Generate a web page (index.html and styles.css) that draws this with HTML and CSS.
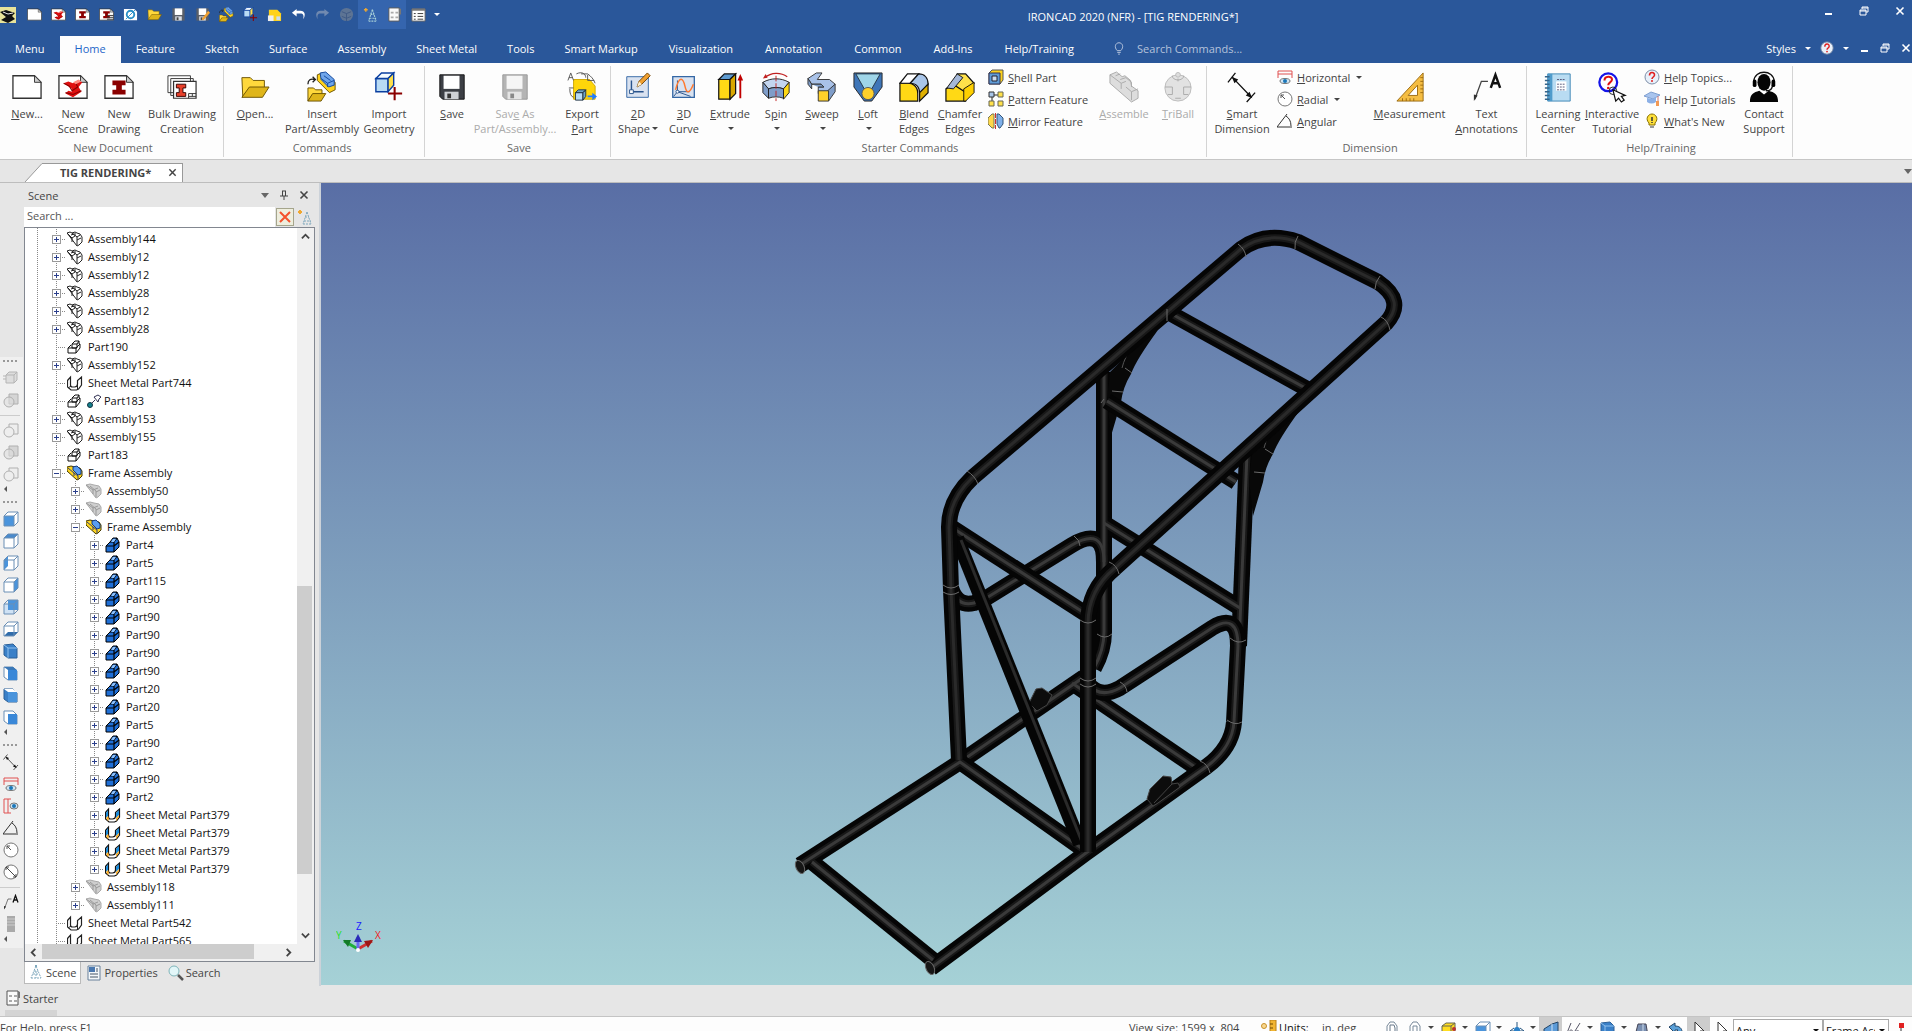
FILE: index.html
```
<!DOCTYPE html>
<html lang="en">
<head>
    <meta charset="UTF-8">
    <meta name="viewport" content="width=device-width, initial-scale=1.0">
    <title>IRONCAD 2020 (NFR) - [TIG RENDERING*]</title>
    <link rel="stylesheet" href="styles.css">
</head>
<body>

<!-- icon sprite -->
<svg class="sprite" aria-hidden="true">
    <symbol id="page" viewBox="0 0 32 32"><path d="M1 4h23l7 7v17H1z" fill="#fff" stroke="#333" stroke-width="1.4"/><path d="M24 4v7h7z" fill="#ccc" stroke="#333"/></symbol>
    <symbol id="scene" viewBox="0 0 32 32"><use href="#page"/><path d="M6 12l5-2 5 2 5-3 5 2-4 5 3 5-9 6-8-4 3-3 4 1v-3z" fill="#e01010"/><path d="M6 12l6 3 3 5 6-4-2-4 4-2M8 22l8 2 9-4" fill="none" stroke="#8a0000" stroke-width="1.200"/><path d="M16 11l6-3 3 2-6 3z" fill="#ff8a80"/></symbol>
    <symbol id="ibeam" viewBox="0 0 32 32"><use href="#page"/><path d="M9 9h14v5h-4v5h4v5H9v-5h4v-5H9z" fill="#8b0000"/></symbol>
    <symbol id="bulk" viewBox="0 0 32 32"><path d="M1 4h24v18H1z M4 7h24v18H4z" fill="#fff" stroke="#333"/><path d="M7 10h24v18H7z" fill="#fff" stroke="#333" stroke-width="1.3"/><path d="M10 13h10v4h-3v5h3v4H10v-4h3v-5h-3z" fill="#e8402a" stroke="#300"/><path d="M23 23h8M23 26h8M23 23v5M27 23v3" stroke="#333"/></symbol>
    <symbol id="folder" viewBox="0 0 32 32"><path d="M2 6h9l3 3h12v8L10 20 3 27z" fill="#ffd83c" stroke="#6b5200"/><path d="M2 27l8-11h21l-7 11z" fill="#dfb51a" stroke="#6b5200"/></symbol>
    <symbol id="insert" viewBox="0 0 32 32"><path d="M1 17h6l2 2h7v5H6l-5 7z" fill="#ffd83c" stroke="#6b5200"/><path d="M1 31l5-8h14l-5 8z" fill="#dfb51a" stroke="#6b5200"/><path d="M1 13c0-5 3-6 7-5m-2-3l3 3-3 3" fill="none" stroke="#222" stroke-width="1.4"/><path d="M11 3l5-2 14 10v8l-6 3-13-13z" fill="#ffd21a" stroke="#6b5200"/><path d="M14 1l6-1 9 8v6l-6 2-8-8z" fill="#6fa5ea" stroke="#10459c"/><path d="M15 7l7 5v4M22 12l7-3M18 4l7 5" fill="none" stroke="#10459c"/></symbol>
    <symbol id="import" viewBox="0 0 32 32"><path d="M2 7h13v14H2z" fill="#b8dbf5" stroke="#0a3fa0" stroke-width="1.5"/><path d="M2 7l6-6h13l-6 6z" fill="#f4fbff" stroke="#0a3fa0" stroke-width="1.5"/><path d="M15 7l6-6v13l-6 7z" fill="#ffe04a" stroke="#0a3fa0" stroke-width="1.5"/><path d="M22 16v14M15 23h15" stroke="#8b0000" stroke-width="2.2"/></symbol>
    <symbol id="save" viewBox="0 0 32 32"><path d="M3 3h26v26H6l-3-3z" fill="#3c3f45" stroke="#111"/><path d="M7 4h17v14H7z" fill="#fff"/><path d="M8 21h15v8H8z" fill="#cfd2d6"/><path d="M11 23h4v5h-4z" fill="#333"/></symbol>
    <symbol id="save-off" viewBox="0 0 32 32"><path d="M3 3h26v26H6l-3-3z" fill="#b4b4b4" stroke="#999"/><path d="M7 4h17v14H7z" fill="#f5f5f5"/><path d="M8 21h15v8H8z" fill="#e4e4e4"/><path d="M11 23h4v5h-4z" fill="#888"/></symbol>
    <symbol id="save-small" viewBox="0 0 32 32"><path d="M3 3h26v26H3z" fill="#5a5f68"/><path d="M8 3h16v14H8z" fill="#fff"/><path d="M9 20h14v9H9z" fill="#d8dce2"/><path d="M12 22h4v6h-4z" fill="#444"/></symbol>
    <symbol id="export" viewBox="0 0 32 32"><path d="M7 8h17l6 7v14H7z" fill="#ffd60a" stroke="#d0a800"/><path d="M1 9l3-8 3 8M2 6h4M3 18c0 5 1 8 4 9M10 2c6-3 10 0 10 4M15 2h7c4 3 6 5 8 10M22 3v6h7M2 17h5" fill="none" stroke="#555"/><path d="M9 22h8v8H9z" fill="#b8dbf5" stroke="#234"/><path d="M9 22l3-3h8l-3 3zM17 22l3-3v7l-3 4z" fill="#6fa5c8" stroke="#234"/><path d="M22 25h5v-3l5 4-5 4v-3h-5z" fill="#1e7bff"/></symbol>
    <symbol id="shape2d" viewBox="0 0 32 32"><path d="M4 5h23v22H4z" fill="#d9e2f0" stroke="#3467a5"/><path d="M9 9v12h13" fill="none" stroke="#28538c" stroke-width="1.5"/><path d="M7 19h4v4H7z" fill="#fff" stroke="#28538c"/><path d="M15 16l2-6 9-9 3 3-9 9z" fill="#f0a030" stroke="#704000"/><path d="M15 16l2-6 3 3z" fill="#fff0d0"/></symbol>
    <symbol id="curve3d" viewBox="0 0 32 32"><path d="M4 5h23v22H4z" fill="#d9e2f0" stroke="#3467a5" stroke-width="1.4"/><path d="M9 9v12h13M9 21l-4 5M9 21l14 5" fill="none" stroke="#28538c"/><path d="M7 19c4-16 8-13 10-4s5 8 9-2" fill="none" stroke="#ff7a30" stroke-width="1.6"/><circle cx="9" cy="21" r="1.6" fill="#fff" stroke="#28538c"/></symbol>
    <symbol id="extrude" viewBox="0 0 32 32"><path d="M4 8h12v21H4z" fill="#ffd915" stroke="#111" stroke-width="1.3"/><path d="M4 8l6-6h12l-6 6z" fill="#5e9bd1" stroke="#111" stroke-width="1.3"/><path d="M16 8l6-6v21l-6 6z" fill="#d9a800" stroke="#111" stroke-width="1.3"/><path d="M27 28V6" stroke="#c00000" stroke-width="2"/><path d="M24 9l3-7 3 7z" fill="#c00000"/></symbol>
    <symbol id="spin" viewBox="0 0 32 32"><path d="M2 11c9-5 19-5 28 0l-6 7c-5-2-11-2-16 0z" fill="#c3d5ef" stroke="#222"/><path d="M2 11l6 7v10l-6-6zM8 18c5-2 11-2 16 0v10c-5-2-11-2-16 0z" fill="#7f9dc9" stroke="#222"/><path d="M24 18l6-7v11l-6 7z" fill="#ffd915" stroke="#222"/><path d="M4 6C11 0 21 0 28 5" fill="none" stroke="#c02020" stroke-width="1.3"/><path d="M2 7l3-5 2 4z" fill="#c02020"/><path d="M16 4v27" stroke="#c02020" stroke-dasharray="6 2"/></symbol>
    <symbol id="sweep" viewBox="0 0 32 32"><path d="M1 7l9-6h6l-5 7h13l6 5-8 10H12v-7h6l-3-3H5z" fill="#a9c2e8" stroke="#333"/><path d="M1 7l4 6v5l-4-5zM5 13h10l3 3h-6M22 20l8-7v8l-7 10z" fill="#7f9dc9" stroke="#333"/><path d="M12 20h11v11H12z" fill="#ffd02a" stroke="#333"/></symbol>
    <symbol id="loft" viewBox="0 0 32 32"><path d="M1 1h30v15L20 31h-8L1 16z" fill="#3f76b8" stroke="#222"/><path d="M3 2h26L20 18h-8z" fill="#9fd5e8" stroke="#234"/><circle cx="16" cy="23" r="6.500" fill="#ffd02a" stroke="#555"/></symbol>
    <symbol id="blend" viewBox="0 0 32 32"><path d="M1 12V31h19V23c0-8-6-12-12-11z" fill="#ffd915" stroke="#111" stroke-width="1.3"/><path d="M1 12L9 2h12L12 12z" fill="#fff" stroke="#111" stroke-width="1.3"/><path d="M12 12L21 2c6 0 10 4 10 11l-9 10c0-7-4-11-10-11z" fill="#a9c5e8" stroke="#111" stroke-width="1.300"/><path d="M22 22l9-9v9l-9 9z" fill="#e0b000" stroke="#111" stroke-width="1.3"/></symbol>
    <symbol id="chamfer" viewBox="0 0 32 32"><path d="M1 18l8-5 13 5v13H1z" fill="#ffd915" stroke="#111" stroke-width="1.3"/><path d="M13 2h9l9 10-10 9-11-7z" fill="#ffe14a" stroke="#111" stroke-width="1.3"/><path d="M2 17L13 2l6 4-10 12z" fill="#a5b8d8" stroke="#111"/><path d="M20 18l11-7v11l-9 9h-2z" fill="#ffd000" stroke="#111"/></symbol>
    <symbol id="shell" viewBox="0 0 16 16"><path d="M1 4l3-3h11v10l-3 4H1z" fill="#ffd21a" stroke="#555"/><path d="M1 4h11v11H1z" fill="#5f9bd5" stroke="#335"/><path d="M4 7h5v5H4z" fill="#cde" stroke="#223"/></symbol>
    <symbol id="pattern" viewBox="0 0 16 16"><path d="M4 4v9M4 4h9" stroke="#222"/><path d="M1 1h5v5H1z" fill="#a9c5e8" stroke="#333"/><path d="M10 1h5v5h-5zM1 10h5v5H1zM10 10h5v5h-5z" fill="#ffe04a" stroke="#665"/></symbol>
    <symbol id="mirror" viewBox="0 0 16 16"><path d="M0 5l4-4h2v14H4l-4-4z" fill="#ffd84a" stroke="#775"/><path d="M9 1h2l4 4v6l-3 4h-1l-2-4z" fill="#7fb0ea" stroke="#357"/><path d="M7.500 0v16" stroke="#d03030" stroke-dasharray="5 1"/></symbol>
    <symbol id="assemble" viewBox="0 0 32 32"><path d="M1 3l7-3 6 5 3-1 6 5 1 6 7 5v8l-7 4L1 12z" fill="#ddd" stroke="#aaa"/><path d="M1 3l12 9 5-2M13 12v6M18 16l6 5v9M24 21l7-3M7 4l5-2M12 8l6-2 6 5v5" fill="none" stroke="#aaa"/></symbol>
    <symbol id="triball" viewBox="0 0 32 32"><circle cx="16" cy="17" r="14" fill="#e2e2e2" stroke="#bbb"/><circle cx="16" cy="3" r="2.500" fill="#ddd" stroke="#bbb"/><path d="M10 4c0 6 12 6 12 0M2 16h8v8H5M30 16h-8v8h5M16 7v3M13 28h6" fill="none" stroke="#aaa"/></symbol>
    <symbol id="smartdim" viewBox="0 0 32 32"><path d="M1 11L9 1M21 32l9-10M6 6l20 21" stroke="#111" stroke-width="1.400"/><path d="M5 5l7 3-4 4zM27 28l-7-3 4-4z" fill="#111"/></symbol>
    <symbol id="horiz" viewBox="0 0 16 16"><path d="M1 2h14M1 2v7M15 2v7M1 5h14" stroke="#e05050" fill="none"/><ellipse cx="8" cy="12" rx="5" ry="2.500" fill="#cfe6f5" stroke="#777"/><circle cx="8" cy="12" r="2" fill="#1b76b8"/></symbol>
    <symbol id="vert" viewBox="0 0 16 16"><path d="M1 1v14M1 1h7M1 15h7M5 1v14" stroke="#e05050" fill="none"/><ellipse cx="11" cy="8" rx="4" ry="3" fill="#cfe6f5" stroke="#777"/><circle cx="11" cy="8" r="2" fill="#1b76b8"/></symbol>
    <symbol id="radial" viewBox="0 0 16 16"><circle cx="8" cy="8" r="7" fill="#fff" stroke="#777"/><path d="M8 8L4 4m0 3V4h3" stroke="#555" fill="none"/></symbol>
    <symbol id="diam" viewBox="0 0 16 16"><circle cx="8" cy="8" r="7" fill="#fff" stroke="#777"/><path d="M3 3l10 10M3 6V3h3M13 10v3h-3" stroke="#444" fill="none"/></symbol>
    <symbol id="angular" viewBox="0 0 16 16"><path d="M0 14L10 1M0 14h15M9 3c3 2 5 5 5 10" fill="none" stroke="#333"/></symbol>
    <symbol id="measure" viewBox="0 0 32 32"><path d="M2 31L30 1v30z" fill="#f5bd42" stroke="#9a6a10"/><path d="M14 25l10-11v11z" fill="#fff" stroke="#9a6a10"/><path d="M27 6h3M27 10h3M27 14h3M27 18h3M27 22h3M8 28v3M12 28v3M16 28v3M20 28v3" stroke="#9a6a10"/></symbol>
    <symbol id="textann" viewBox="0 0 32 32"><path d="M3 29l7-19h7" fill="none" stroke="#444" stroke-width="1.400"/><path d="M2 31l0-7 4 1z" fill="#333"/><path d="M20 17l5-14 5 14M22 12h6" fill="none" stroke="#111" stroke-width="2.600"/></symbol>
    <symbol id="learn" viewBox="0 0 32 32"><path d="M5 2h24v29H5z" fill="#b9dcf2" stroke="#3f87b5"/><path d="M5 2h5v29H5z" fill="#4f9bcb"/><path d="M2 5h5M2 9h5M2 13h5M2 17h5M2 21h5M2 25h5M2 29h5" stroke="#35658a" stroke-width="1.500"/><path d="M14 10h11v10H14z" fill="#fff"/><path d="M15 8h9M15 13h9M15 16h9M15 19h9" stroke="#557" stroke-dasharray="2 1"/></symbol>
    <symbol id="tutor" viewBox="0 0 32 32"><circle cx="12" cy="11" r="9.500" fill="#fff" stroke="#1414e8" stroke-width="2.400"/><path d="M8 9c0-5 8-5 8-1 0 3-4 3-4 6" fill="none" stroke="#e01010" stroke-width="2.200"/><circle cx="12" cy="17" r="1.400" fill="#e01010"/><circle cx="17" cy="20" r="4" fill="none" stroke="#222"/><path d="M17 19l3 12 3-3 3 4 3-2-3-4 4-1z" fill="#fff" stroke="#111" stroke-width="1.300"/></symbol>
    <symbol id="help" viewBox="0 0 16 16"><circle cx="8" cy="8" r="7" fill="#e8f0fa" stroke="#7f8fa8"/><path d="M5.500 6.500c0-4 5-4 5-.5 0 2-2.500 2-2.500 4" fill="none" stroke="#e02020" stroke-width="1.600"/><circle cx="8" cy="12" r="1" fill="#e02020"/></symbol>
    <symbol id="cap" viewBox="0 0 16 16"><path d="M0 5l7-4 9 3-7 4z" fill="#a8c4ee" stroke="#7f9fd0"/><path d="M3 7v4c3 2 6 2 9 0V6L9 8z" fill="#8cb0e6"/><path d="M14 5v5" stroke="#c77"/><path d="M12 10h3v5h-3z" fill="#f29a55"/></symbol>
    <symbol id="bulb" viewBox="0 0 16 16"><path d="M5 10C1 6 4 1 8 1s7 5 3 9v2H5z" fill="#ffe03a" stroke="#887000"/><path d="M8 4v4M8 9v1" stroke="#333" stroke-width="1.500"/><path d="M6 13h4v2H6z" fill="#999"/></symbol>
    <symbol id="contact" viewBox="0 0 32 32"><ellipse cx="16" cy="11" rx="7" ry="9" fill="#050505"/><path d="M5 13V10C6-3 26-3 27 10v3M25 14c0 5-3 6-7 6" fill="none" stroke="#111" stroke-width="1.400"/><rect x="4" y="8" width="4" height="8" rx="2"/><rect x="24" y="8" width="4" height="8" rx="2"/><path d="M1 32c0-9 4-10 10-12l5 4 5-4c6 2 10 3 10 12z" fill="#050505"/></symbol>
    <symbol id="lamp" viewBox="0 0 16 16"><path d="M6 11C2 7 4 2 8 2s6 5 2 9zM6 13h4M7 15h2" fill="none" stroke="#c5d0e4"/></symbol>
    <symbol id="undo" viewBox="0 0 16 16"><path d="M6 2L1 6l5 4V7h4c3 0 4 2 3 6 3-4 2-9-3-9H6z" fill="currentColor"/></symbol>
    <symbol id="sphere" viewBox="0 0 16 16"><circle cx="8" cy="8" r="7" fill="#5d7494"/><path d="M3 5l5 2 5-2M8 7v8M3 10l5 2 5-2" stroke="#3f5a84" fill="none"/></symbol>
    <symbol id="scenetree" viewBox="0 0 16 16"><path d="M8 2L3 14M8 2l5 12M6 7h4M5 10h6M3 14h10M8 7v7" fill="none" stroke="#7fa8bd" stroke-dasharray="2 1"/><path d="M7 1h2v2H7z" fill="#7fa8bd"/></symbol>
    <symbol id="scenestar" viewBox="0 0 16 16"><path d="M1 3h4M3 1v4" stroke="#f0a830" stroke-width="1.500"/><path d="M10 3L6 15M10 3l4 12M8 8h4M7 12h7M6 15h9" stroke="#a8d0d8" stroke-width="1.300" stroke-dasharray="2 1" fill="none"/></symbol>
    <symbol id="catalog" viewBox="0 0 16 16"><path d="M2 1h11v14H2z" fill="#fafafa" stroke="#555"/><path d="M13 1l2 1v6h-2z" fill="#777"/><path d="M4 5h3v2H4zM9 5h3v2H9zM4 10h3v2H4zM9 10h3v2H9z" fill="#aaa"/></symbol>
    <symbol id="props" viewBox="0 0 16 16"><path d="M2 1h12v14H2z" fill="#f4f8fb" stroke="#68809a"/><path d="M3 2h6v5H3z" fill="#4a78b0"/><path d="M4 9h8M4 12h8M11 3v4" stroke="#456"/></symbol>
    <symbol id="list" viewBox="0 0 16 16"><path d="M1 2h14v13H1z" fill="#fff" stroke="#666"/><path d="M1 2h14v2H1z" fill="#777"/><path d="M3 7h2M7 7h6M3 10h2M7 10h6M3 13h2M7 13h6" stroke="#333"/></symbol>
    <symbol id="glass" viewBox="0 0 16 16"><circle cx="6" cy="6" r="5" fill="#e2f6f8" stroke="#7fb5ba"/><path d="M10 10l5 5" stroke="#555" stroke-width="2.500"/></symbol>
    <!-- tree icons -->
    <symbol id="asm" viewBox="0 0 16 16"><path d="M0 2l3-1 2 1 3-1 2 1 3 1 2 3v5l-3 3-2 1z" fill="#fff" stroke="#222"/><path d="M0 2l5 5v4M5 7l3-2M5 2l5 4v8M8 5V2M10 9l4-2M10 6l3-2M4 4l3-1" fill="none" stroke="#222"/></symbol>
    <symbol id="asm-off" viewBox="0 0 16 16"><path d="M0 2l4-1 4 1 5 1 2 3v5l-3 3-2 1z" fill="#cfcfcf" stroke="#aaa"/><path d="M0 2l7 5v4M7 7l5-2M4 3l6 5v6M10 9l4-2" fill="none" stroke="#999"/></symbol>
    <symbol id="asm-on" viewBox="0 0 16 16"><path d="M0 2l4-1 4 1 5 1 2 3v5l-3 3-2 1-10-9z" fill="#ffd61f" stroke="#443800"/><path d="M6 2l4-1 4 4v4l-3 1-5-5z" fill="#5b9df0" stroke="#123a80"/><path d="M1 3l6 5v3M7 8l4 3v3" fill="none" stroke="#2a3a80"/></symbol>
    <symbol id="part" viewBox="0 0 16 16"><path d="M1 9h8v5H1zM1 9l3-3M9 9l4-4v4l-4 5M5 5h5v4H5zM5 5l3-3h4v3h1M10 5l2-3" fill="#fff" stroke="#111"/></symbol>
    <symbol id="part-on" viewBox="0 0 16 16"><path d="M1 9l4-4V5l3-4h4l2 4v5l-5 5H1z" fill="#1f6fd6" stroke="#000"/><path d="M1 9h8v6M9 9l5-4M5 5h4v4M9 5l3-4" fill="none" stroke="#000" stroke-width="1.200"/><path d="M6 5l2-3h3L9 5z" fill="#8cc2ff"/></symbol>
    <symbol id="sheet" viewBox="0 0 16 16"><path d="M0.500 5.500l3-3.500v8q0 2 2 2h2q3 0 3-3V5.500l4-3.500v8l-3 4-2 1H4l-3.500-3z" fill="#fff" stroke="#222" stroke-width="1.200"/><path d="M4 11l-3 2M10.500 10v4" stroke="#222"/></symbol>
    <symbol id="sheet-on" viewBox="0 0 16 16"><path d="M0.500 5.500l3-3.500v8q0 2 2 2h2q3 0 3-3V5.500l4-3.500v8l-3 4-2 1H4l-3.500-3z" fill="#fff" stroke="#111" stroke-width="1.200"/><path d="M1 6l2-3v6l-2 2zM11 6l3-3v5l-3 3z" fill="#1b8ad8"/><path d="M1 11l2-2 1 3-1 2zM11 11l3-3v2l-3 4z" fill="#ffb02a"/></symbol>
    <symbol id="pin" viewBox="0 0 16 16"><path d="M4 12l5-5M8 4l4 5 1-3 2-2-3-2-2 1z" fill="#fff" stroke="#335"/><circle cx="4" cy="12" r="2.500" fill="#12828c" stroke="#134"/></symbol>
    <!-- view cubes -->
    <symbol id="wire" viewBox="0 0 16 16"><path d="M1 5l4-4h10v10l-4 4H1zM1 5h10v10M11 5l4-4" fill="none" stroke="#6b8fb5"/></symbol>
    <symbol id="cube-front" viewBox="0 0 16 16"><path d="M1 5l4-4h10v10l-4 4V5z" fill="#fff"/><path d="M1 5h10v10H1z" fill="#4a94dc"/><use href="#wire"/></symbol>
    <symbol id="cube-top" viewBox="0 0 16 16"><path d="M1 5h10v10H1zM11 5l4-4v10l-4 4z" fill="#fff"/><path d="M1 5l4-4h10l-4 4z" fill="#4a8acc"/><use href="#wire"/></symbol>
    <symbol id="cube-left" viewBox="0 0 16 16"><path d="M5 1h10v10l-4 4H1z" fill="#fff"/><path d="M1 5l4-4v10l-4 4z" fill="#4a94dc"/><use href="#wire"/></symbol>
    <symbol id="cube-right" viewBox="0 0 16 16"><path d="M1 5l4-4h10l-4 4v10H1z" fill="#fff"/><path d="M11 5l4-4v10l-4 4z" fill="#4a94dc"/><use href="#wire"/></symbol>
    <symbol id="cube-back" viewBox="0 0 16 16"><path d="M1 5h10v10H1z" fill="#cfe2f5"/><path d="M5 1h10v10H5z" fill="#4a94dc"/><use href="#wire"/></symbol>
    <symbol id="cube-bottom" viewBox="0 0 16 16"><path d="M1 5l4-4h10v10H5l-4 4z" fill="#fff"/><path d="M1 15l4-4h10l-4 4z" fill="#2f6cab"/><use href="#wire"/></symbol>
    <symbol id="cube-iso" viewBox="0 0 16 16"><path d="M1 2l9-1 4 4v10H5l-4-3z" fill="#3a80c8" stroke="#2b5f96"/><path d="M1 2l4 3h9M5 5v10" stroke="#8fc0ee" fill="none"/></symbol>
    <symbol id="cube-iso2" viewBox="0 0 16 16"><path d="M1 2h9l4 4v9H5l-4-3z" fill="#fff" stroke="#6b8fb5"/><path d="M5 5h9v10H5z" fill="#3a88d8"/><path d="M1 2h9l4 3H5z" fill="#3a78b8"/></symbol>
    <symbol id="cube-iso3" viewBox="0 0 16 16"><path d="M1 2h9l4 4v9H5l-4-3z" fill="#3a80c8" stroke="#2b5f96"/><path d="M5 5h9v10H5z" fill="#4a94dc"/><path d="M1 2h9l4 3H5z" fill="#fff"/></symbol>
    <symbol id="cube-iso4" viewBox="0 0 16 16"><path d="M1 2h9l4 4v9H5l-4-3z" fill="#fff" stroke="#6b8fb5"/><path d="M5 5h9v10H5z" fill="#3a88d8"/></symbol>
    <symbol id="cube-gray" viewBox="0 0 16 16"><path d="M3 5l3-3h8v8l-3 3H3zM3 5h8v8M11 5l3-3M0 6h3M0 9h3" fill="#ddd" stroke="#b5b5b5"/></symbol>
    <symbol id="bool" viewBox="0 0 16 16"><path d="M6 2h9v10H6z" fill="#d5d5d5" stroke="#b0b0b0"/><circle cx="6" cy="10" r="5" fill="#ddd" fill-opacity=".6" stroke="#b0b0b0"/></symbol>
    <symbol id="bool2" viewBox="0 0 16 16"><path d="M6 2h9v10H6z" fill="#eee" stroke="#b0b0b0"/><circle cx="6" cy="10" r="5" fill="#eee" stroke="#b0b0b0"/></symbol>
    <symbol id="restore" viewBox="0 0 10 10"><path d="M3 3V1h6v5H7M1 4h6v5H1zM1 5h6M3 2h6" fill="none" stroke="#fff"/></symbol>
    <symbol id="cross" viewBox="0 0 10 10"><path d="M1.500 1.500l7 7M8.500 1.500l-7 7" fill="none" stroke="currentColor" stroke-width="1.600"/></symbol>
    <symbol id="cursor" viewBox="0 0 16 16"><path d="M4 1v13l3-3 2 4 2-1-2-4h4z" fill="#fff" stroke="#333"/></symbol>
</svg>

<header class="titlebar">
    <div class="quick-access">
        <svg class="app-icon" viewBox="0 0 16 16"><path d="M0 0h16v16H0z" fill="#e8e39a"/><path d="M0 5l6-2 9 3-3 3 3 3-7 4-7-3 5-3z" fill="#111"/><path d="M3 5l5 2 5-1" stroke="#eee"/></svg>
        <button title="New"><svg><use href="#page"/></svg></button>
        <button title="New Scene"><svg><use href="#scene"/></svg></button>
        <button title="New Drawing"><svg><use href="#ibeam"/></svg></button>
        <button title="Bulk Drawing"><svg viewBox="0 0 32 32"><use href="#ibeam"/><path d="M17 18h14M17 22h14M17 26h14" stroke="#333" stroke-width="2"/></svg></button>
        <button title="New Sheet"><svg viewBox="0 0 16 16"><path d="M1 2h11l3 3v9H1z" fill="#fff"/><circle cx="8" cy="8" r="4" fill="none" stroke="#2a90c8" stroke-width="2"/><path d="M3 13L13 3" stroke="#2a90c8"/></svg></button>
        <button title="Open"><svg><use href="#folder"/></svg></button>
        <button title="Save"><svg><use href="#save-small"/></svg></button>
        <button title="Save As"><svg viewBox="0 0 32 32"><use href="#save-small"/><path d="M14 26L28 8l4 4-14 16z" fill="#f0a030"/></svg></button>
        <button title="Insert Part"><svg><use href="#insert"/></svg></button>
        <button title="Import"><svg><use href="#import"/></svg></button>
        <button title="Export"><svg viewBox="0 0 16 16"><path d="M2 3h9l4 4v8H2z" fill="#ffd21a"/><path d="M1 9h6v6H1z" fill="#eee"/><path d="M10 10h4v4h-4z" fill="#cde"/></svg></button>
        <button title="Undo"><svg><use href="#undo"/></svg></button>
        <button title="Redo" class="redo"><svg><use href="#undo"/></svg></button>
        <button title="Render"><svg><use href="#sphere"/></svg></button>
        <button title="Scene Browser" class="active"><svg><use href="#scenestar"/></svg></button>
        <button title="Catalogs" class="active"><svg><use href="#catalog"/></svg></button>
        <button title="Properties"><svg><use href="#list"/></svg></button>
        <button title="Customize" class="more"><i class="caret"></i></button>
    </div>
    <h1>IRONCAD 2020 (NFR) - [TIG RENDERING*]</h1>
    <div class="window-buttons">
        <button title="Minimize"><i class="dash"></i></button>
        <button title="Restore"><svg><use href="#restore"/></svg></button>
        <button title="Close"><svg><use href="#cross"/></svg></button>
    </div>
</header>

<nav class="tabs">
    <button>Menu</button>
    <button class="selected">Home</button>
    <button>Feature</button>
    <button>Sketch</button>
    <button>Surface</button>
    <button>Assembly</button>
    <button>Sheet Metal</button>
    <button>Tools</button>
    <button>Smart Markup</button>
    <button class="roomy">Visualization</button>
    <button class="roomy">Annotation</button>
    <button class="roomy">Common</button>
    <button class="roomy">Add-Ins</button>
    <button class="roomy">Help/Training</button>
    <label class="command-search"><svg><use href="#lamp"/></svg><input type="text" placeholder="Search Commands..."></label>
    <div class="tab-tools">
        <button>Styles</button>
        <i class="caret"></i>
        <button title="Help"><svg class="help-icon"><use href="#help"/></svg></button>
        <i class="caret"></i>
        <button title="Minimize"><i class="dash"></i></button>
        <button title="Restore"><svg><use href="#restore"/></svg></button>
        <button title="Close"><svg><use href="#cross"/></svg></button>
    </div>
</nav>

<section class="ribbon">
    <div class="group">
        <div class="tools">
            <button class="big"><svg><use href="#page"/></svg><span><u>N</u>ew...</span></button>
            <button class="big"><svg><use href="#scene"/></svg><span>New<br>Scene</span></button>
            <button class="big"><svg><use href="#ibeam"/></svg><span>New<br>Drawing</span></button>
            <button class="big wide"><svg><use href="#bulk"/></svg><span>Bulk Drawing<br>Creation</span></button>
        </div>
        <h2>New Document</h2>
    </div>
    <div class="group commands">
        <div class="tools">
            <button class="big mid"><svg><use href="#folder"/></svg><span><u>O</u>pen...</span></button>
            <button class="big wide"><svg><use href="#insert"/></svg><span>Insert<br>Part/Assembly</span></button>
            <button class="big mid"><svg><use href="#import"/></svg><span>Import<br>Geometry</span></button>
        </div>
        <h2>Commands</h2>
    </div>
    <div class="group">
        <div class="tools">
            <button class="big"><svg><use href="#save"/></svg><span><u>S</u>ave</span></button>
            <button class="big wide" disabled><svg><use href="#save-off"/></svg><span>Sav<u>e</u> As<br>Part/Assembly...</span></button>
            <button class="big mid"><svg><use href="#export"/></svg><span>Export<br><u>P</u>art</span></button>
        </div>
        <h2>Save</h2>
    </div>
    <div class="group">
        <div class="tools">
            <button class="big"><svg><use href="#shape2d"/></svg><span><u>2</u>D<br>Shape<i class="caret"></i></span></button>
            <button class="big"><svg><use href="#curve3d"/></svg><span><u>3</u>D<br>Curve</span></button>
            <button class="big"><svg><use href="#extrude"/></svg><span><u>E</u>xtrude<br><i class="caret"></i></span></button>
            <button class="big"><svg><use href="#spin"/></svg><span>S<u>p</u>in<br><i class="caret"></i></span></button>
            <button class="big"><svg><use href="#sweep"/></svg><span><u>S</u>weep<br><i class="caret"></i></span></button>
            <button class="big"><svg><use href="#loft"/></svg><span><u>L</u>oft<br><i class="caret"></i></span></button>
            <button class="big"><svg><use href="#blend"/></svg><span><u>B</u>lend<br>Edges</span></button>
            <button class="big"><svg><use href="#chamfer"/></svg><span><u>C</u>hamfer<br>Edges</span></button>
            <div class="stack features">
                <button><svg><use href="#shell"/></svg><span><u>S</u>hell Part</span></button>
                <button><svg><use href="#pattern"/></svg><span><u>P</u>attern Feature</span></button>
                <button><svg><use href="#mirror"/></svg><span><u>M</u>irror Feature</span></button>
            </div>
            <button class="big mid" disabled><svg><use href="#assemble"/></svg><span><u>A</u>ssemble</span></button>
            <button class="big mid" disabled><svg><use href="#triball"/></svg><span><u>T</u>riBall</span></button>
        </div>
        <h2>Starter Commands</h2>
    </div>
    <div class="group dimension">
        <div class="tools">
            <button class="big mid"><svg><use href="#smartdim"/></svg><span><u>S</u>mart<br>Dimension</span></button>
            <div class="stack">
                <button><svg><use href="#horiz"/></svg><span><u>H</u>orizontal</span><i class="caret"></i></button>
                <button><svg><use href="#radial"/></svg><span><u>R</u>adial</span><i class="caret"></i></button>
                <button><svg><use href="#angular"/></svg><span><u>A</u>ngular</span></button>
            </div>
            <button class="big wide"><svg><use href="#measure"/></svg><span><u>M</u>easurement</span></button>
            <button class="big wide"><svg><use href="#textann"/></svg><span>Text<br><u>A</u>nnotations</span></button>
        </div>
        <h2>Dimension</h2>
    </div>
    <div class="group">
        <div class="tools">
            <button class="big mid"><svg><use href="#learn"/></svg><span>Learning<br>Center</span></button>
            <button class="big mid"><svg><use href="#tutor"/></svg><span><u>I</u>nteractive<br>Tutorial</span></button>
            <div class="stack">
                <button><svg><use href="#help"/></svg><span><u>H</u>elp Topics...</span></button>
                <button><svg><use href="#cap"/></svg><span>Help <u>T</u>utorials</span></button>
                <button><svg><use href="#bulb"/></svg><span><u>W</u>hat's New</span></button>
            </div>
            <button class="big mid"><svg><use href="#contact"/></svg><span>Contact<br>Support</span></button>
        </div>
        <h2>Help/Training</h2>
    </div>
</section>

<div class="doc-tabs">
    <svg class="slant" viewBox="0 0 18 19"><path d="M0 19L17 .5h1V19z" fill="#fff"/><path d="M0 19L17 .5h1" fill="none" stroke="#999"/></svg>
    <div class="doc-tab"><strong>TIG RENDERING*</strong><button title="Close"><svg><use href="#cross"/></svg></button></div>
    <i class="arrow-down"></i>
</div>

<main class="workspace">
    <aside class="side-tools">
        <div class="side-bar">
            <i class="grip first"></i>
            <button title="Block"><svg><use href="#cube-gray"/></svg></button>
            <button title="Combine"><svg><use href="#bool"/></svg></button>
            <hr>
            <button title="Subtract"><svg><use href="#bool2"/></svg></button>
            <button title="Intersect"><svg><use href="#bool"/></svg></button>
            <button title="Split"><svg><use href="#bool2"/></svg></button>
            <i class="fold"></i>
            <i class="grip"></i>
            <button title="Front"><svg><use href="#cube-front"/></svg></button>
            <button title="Top"><svg><use href="#cube-top"/></svg></button>
            <button title="Left"><svg><use href="#cube-left"/></svg></button>
            <button title="Right"><svg><use href="#cube-right"/></svg></button>
            <button title="Back"><svg><use href="#cube-back"/></svg></button>
            <button title="Bottom"><svg><use href="#cube-bottom"/></svg></button>
            <button title="Isometric 1"><svg><use href="#cube-iso"/></svg></button>
            <button title="Isometric 2"><svg><use href="#cube-iso2"/></svg></button>
            <button title="Isometric 3"><svg><use href="#cube-iso3"/></svg></button>
            <button title="Isometric 4"><svg><use href="#cube-iso4"/></svg></button>
            <i class="fold"></i>
            <i class="grip"></i>
            <button title="Smart Dimension"><svg><use href="#smartdim"/></svg></button>
            <button title="Horizontal"><svg><use href="#horiz"/></svg></button>
            <button title="Vertical"><svg><use href="#vert"/></svg></button>
            <button title="Angular"><svg><use href="#angular"/></svg></button>
            <button title="Radial"><svg><use href="#radial"/></svg></button>
            <button title="Diameter"><svg><use href="#diam"/></svg></button>
            <hr>
            <button title="Text"><svg><use href="#textann"/></svg></button>
            <button title="Table"><svg viewBox="0 0 16 16"><path d="M4 0h8v16H4z" fill="#aaa"/><path d="M4 3h8M4 6h8M4 9h8" stroke="#ccc"/></svg></button>
            <i class="fold"></i>
        </div>
    </aside>

    <section class="panel">
        <div class="panel-head">
            <h2>Scene</h2>
            <button title="Options"><i class="arrow-down"></i></button>
            <button title="Auto hide"><svg viewBox="0 0 10 10"><path d="M3 1h4M3.500 1v5M6.500 1v5M1 6h8M5 6v4" fill="none" stroke="#444"/></svg></button>
            <button title="Close"><svg><use href="#cross"/></svg></button>
        </div>
        <div class="panel-search">
            <input type="text" placeholder="Search ..." aria-label="Search scene">
            <button class="clear" title="Clear"><svg viewBox="0 0 16 16"><path d="M3 3l10 10M13 3L3 13" stroke="#f4512c" stroke-width="2"/></svg></button>
            <button title="Filter"><svg viewBox="0 0 16 16"><path d="M1 3h4M3 1v4" stroke="#f0a830" stroke-width="2"/><path d="M10 3L6 15M10 3l4 12M8 8h4M7 12h7M6 15h9" stroke="#7fa8bd" stroke-dasharray="2 1" fill="none"/></svg></button>
        </div>
        <div class="tree-box">
            <div class="tree-row">
                <div class="tree">
                    <ul>
                        <li><div class="node"><button class="plus"></button><svg><use href="#asm"/></svg>Assembly144</div></li>
                        <li><div class="node"><button class="plus"></button><svg><use href="#asm"/></svg>Assembly12</div></li>
                        <li><div class="node"><button class="plus"></button><svg><use href="#asm"/></svg>Assembly12</div></li>
                        <li><div class="node"><button class="plus"></button><svg><use href="#asm"/></svg>Assembly28</div></li>
                        <li><div class="node"><button class="plus"></button><svg><use href="#asm"/></svg>Assembly12</div></li>
                        <li><div class="node"><button class="plus"></button><svg><use href="#asm"/></svg>Assembly28</div></li>
                        <li><div class="node leaf"><svg><use href="#part"/></svg>Part190</div></li>
                        <li><div class="node"><button class="plus"></button><svg><use href="#asm"/></svg>Assembly152</div></li>
                        <li><div class="node leaf"><svg><use href="#sheet"/></svg>Sheet Metal Part744</div></li>
                        <li><div class="node leaf pinned"><svg><use href="#part"/></svg><svg><use href="#pin"/></svg>Part183</div></li>
                        <li><div class="node"><button class="plus"></button><svg><use href="#asm"/></svg>Assembly153</div></li>
                        <li><div class="node"><button class="plus"></button><svg><use href="#asm"/></svg>Assembly155</div></li>
                        <li><div class="node leaf"><svg><use href="#part"/></svg>Part183</div></li>
                        <li><div class="node"><button class="minus"></button><svg><use href="#asm-on"/></svg>Frame Assembly</div>
                            <ul>
                                <li><div class="node"><button class="plus"></button><svg><use href="#asm-off"/></svg>Assembly50</div></li>
                                <li><div class="node"><button class="plus"></button><svg><use href="#asm-off"/></svg>Assembly50</div></li>
                                <li><div class="node"><button class="minus"></button><svg><use href="#asm-on"/></svg>Frame Assembly</div>
                                    <ul>
                                        <li><div class="node"><button class="plus"></button><svg><use href="#part-on"/></svg>Part4</div></li>
                                        <li><div class="node"><button class="plus"></button><svg><use href="#part-on"/></svg>Part5</div></li>
                                        <li><div class="node"><button class="plus"></button><svg><use href="#part-on"/></svg>Part115</div></li>
                                        <li><div class="node"><button class="plus"></button><svg><use href="#part-on"/></svg>Part90</div></li>
                                        <li><div class="node"><button class="plus"></button><svg><use href="#part-on"/></svg>Part90</div></li>
                                        <li><div class="node"><button class="plus"></button><svg><use href="#part-on"/></svg>Part90</div></li>
                                        <li><div class="node"><button class="plus"></button><svg><use href="#part-on"/></svg>Part90</div></li>
                                        <li><div class="node"><button class="plus"></button><svg><use href="#part-on"/></svg>Part90</div></li>
                                        <li><div class="node"><button class="plus"></button><svg><use href="#part-on"/></svg>Part20</div></li>
                                        <li><div class="node"><button class="plus"></button><svg><use href="#part-on"/></svg>Part20</div></li>
                                        <li><div class="node"><button class="plus"></button><svg><use href="#part-on"/></svg>Part5</div></li>
                                        <li><div class="node"><button class="plus"></button><svg><use href="#part-on"/></svg>Part90</div></li>
                                        <li><div class="node"><button class="plus"></button><svg><use href="#part-on"/></svg>Part2</div></li>
                                        <li><div class="node"><button class="plus"></button><svg><use href="#part-on"/></svg>Part90</div></li>
                                        <li><div class="node"><button class="plus"></button><svg><use href="#part-on"/></svg>Part2</div></li>
                                        <li><div class="node"><button class="plus"></button><svg><use href="#sheet-on"/></svg>Sheet Metal Part379</div></li>
                                        <li><div class="node"><button class="plus"></button><svg><use href="#sheet-on"/></svg>Sheet Metal Part379</div></li>
                                        <li><div class="node"><button class="plus"></button><svg><use href="#sheet-on"/></svg>Sheet Metal Part379</div></li>
                                        <li><div class="node"><button class="plus"></button><svg><use href="#sheet-on"/></svg>Sheet Metal Part379</div></li>
                                    </ul>
                                </li>
                                <li><div class="node"><button class="plus"></button><svg><use href="#asm-off"/></svg>Assembly118</div></li>
                                <li><div class="node"><button class="plus"></button><svg><use href="#asm-off"/></svg>Assembly111</div></li>
                            </ul>
                        </li>
                        <li><div class="node leaf"><svg><use href="#sheet"/></svg>Sheet Metal Part542</div></li>
                        <li><div class="node leaf"><svg><use href="#sheet"/></svg>Sheet Metal Part565</div></li>
                    </ul>
                </div>
                <div class="vscroll">
                    <button title="Up"><svg viewBox="0 0 10 10"><path d="M1 7l4-4 4 4" fill="none" stroke="#444" stroke-width="2"/></svg></button>
                    <div class="track"><i></i></div>
                    <button title="Down"><svg viewBox="0 0 10 10"><path d="M1 3l4 4 4-4" fill="none" stroke="#444" stroke-width="2"/></svg></button>
                </div>
            </div>
            <div class="hscroll">
                <button title="Left"><svg viewBox="0 0 10 10"><path d="M7 1L3 5l4 4" fill="none" stroke="#444" stroke-width="2"/></svg></button>
                <div class="track"><i></i></div>
                <button title="Right"><svg viewBox="0 0 10 10"><path d="M3 1l4 4-4 4" fill="none" stroke="#444" stroke-width="2"/></svg></button>
            </div>
        </div>
        <div class="panel-tabs">
            <button class="selected"><svg><use href="#scenetree"/></svg>Scene</button>
            <button><svg><use href="#props"/></svg>Properties</button>
            <button><svg><use href="#glass"/></svg>Search</button>
        </div>
    </section>

    <section class="viewport">
        <svg class="model" viewBox="321 183 1591 802">
            <defs>
                <!-- far side of the frame -->
                <g id="rear">
                    <path d="M1104 372V632Q1104 650 1094 668"/>
                    <path d="M1247 454L1239 646"/>
                    <path d="M1104 523L1240 608"/>
                    <path d="M951 588Q957 607 974 603L988 597L1072 545Q1104 526 1104 562"/>
                    <path d="M1072 683L1198 769"/>
                    <path d="M960 762L1084 677"/>
                </g>
                <g id="brace">
                    <path d="M1158 330Q1136 360 1131 374Q1123 387 1121 402L1111 436L1107 400L1110 372L1138 344z"/>
                    <path d="M1131 350q-6 6-9 18" fill="none" stroke="#555"/>
                </g>
                <g id="middle">
                    <path d="M1168 312L1309 390"/>
                    <path d="M1107 401L1236 482"/>
                    <path d="M1088 684Q1100 699 1120 688L1212 628Q1238 612 1238 646L1234 722Q1232 748 1206 767L1086 853L931 968"/>
                    <path d="M800 865L960 762L1084 850"/>
                    <path d="M812 862L933 960"/>
                    <path d="M951 527L1086 614"/>
                </g>
                <g id="front">
                    <path d="M959 760L951 590L949 527Q949 500 972 478L1241 249Q1266 231 1298 242L1378 282Q1406 301 1386 323L1115 568Q1088 590 1088 624V852"/>
                </g>
            </defs>
            <use href="#rear" class="tube"/>
            <use href="#rear" class="shade"/>
            <use href="#rear" class="shine"/>
            <use href="#brace" class="brace"/>
            <use href="#brace" class="brace" x="142" y="80"/>
            <path d="M1029 703l7-14 6-1 10 7-5 10-10 6z" fill="#0c0c0c" stroke="#444"/>
            <use href="#middle" class="tube"/>
            <use href="#middle" class="shade"/>
            <use href="#middle" class="shine"/>
            <path d="M1147 799l3-10 13-13 8 1 1 7 6-1 2 4-22 16-5 3z" fill="#0c0c0c" stroke="#444"/>
            <path d="M1154 803l18-19" stroke="#444"/>
            <path class="tube diagonal" d="M957 538L1080 844"/>
            <path class="shine dim" d="M961 540L1082 842"/>
            <use href="#front" class="tube"/>
            <use href="#front" class="shade"/>
            <use href="#front" class="shine dim"/>
            <!-- seams and open tube ends -->
            <path class="seam" d="M967 471q8 5 11 13M1238 244q7 5 8 13M1298 236q-4 6-3 13M1380 276q-5 6-5 13M1381 317q7 3 9 13M1109 562q8 3 10 12M943 585q8 6 16 0M943 592q8 5 16 0M1080 620q8 6 16 0M1080 678q8 6 16 0M1080 684q8 6 16 0M1097 634q8 6 15 0M1230 638q8 7 16 2M1227 720q8 6 15 2M1074 536q6 4 6 10M1120 682q6 3 7 10M1200 761q8 3 10 12M1167 309v12M1125 368l7 5M1112 391l11 1M1265 449l8 5M1254 472l11 1M1101 403l3-4"/>
            <ellipse cx="800" cy="867" rx="4" ry="7" class="end" transform="rotate(-25 800 867)"/>
            <ellipse cx="930" cy="968" rx="4" ry="7" class="end" transform="rotate(-25 930 968)"/>
        </svg>
        <svg class="triad" viewBox="0 0 48 36">
            <path d="M22 28L8 20" stroke="#1fae3a" stroke-width="3"/><path d="M7 19l8 0-3 7z" fill="#147a28"/>
            <path d="M22 28l14-8" stroke="#d03030" stroke-width="3"/><path d="M37 19l-9 1 4 7z" fill="#9c1616"/>
            <path d="M22 28V16" stroke="#6a6af0" stroke-width="3"/><path d="M22 13l4 8h-8z" fill="#2b2bb8"/>
            <circle cx="22" cy="29" r="2" fill="#fff"/>
            <text x="0" y="18" fill="#1fe01f">Y</text><text x="20" y="9" fill="#2020ff">Z</text><text x="39" y="18" fill="#f02020">X</text>
        </svg>
    </section>
</main>

<div class="starter">
    <button><svg><use href="#catalog"/></svg>Starter</button>
    <i></i>
</div>

<footer class="statusbar">
    <span class="help-text">For Help, press F1</span>
    <span class="view-size">View size: 1599 x&nbsp; 804</span>
    <svg class="ruler" viewBox="0 0 16 16"><circle cx="3" cy="6" r="2.500" fill="#f8d890" stroke="#c8902a"/><path d="M9 0h6v16H9z" fill="#f2b632" stroke="#b8801a"/><path d="M9 4h3M9 8h3M9 12h3" stroke="#704a00"/></svg>
    <span class="units">Units:</span>
    <span class="unit-value">in, deg</span>
    <div class="status-tools">
        <button title="Zoom"><svg viewBox="0 0 16 16"><path d="M3 12V5l3-4h4l3 4v7l-3 3H6z" fill="#fff" stroke="#789"/><path d="M6 4h4l1 3v4H6z" fill="none" stroke="#678"/></svg></button>
        <button title="Fit"><svg viewBox="0 0 16 16"><path d="M3 12V5l3-4h4l3 4v7l-3 3H6z" fill="#fff" stroke="#789"/><path d="M6 5h4v6H6z" fill="none" stroke="#789"/></svg></button>
        <i class="caret"></i>
        <button title="Extents"><svg viewBox="0 0 16 16"><path d="M1 5l4-3h9v9l-4 4H1z" fill="#ffdd20" stroke="#665"/><path d="M1 5h9v9M10 5l4-3" stroke="#665" fill="none"/><circle cx="13" cy="8" r="2" fill="#b33"/></svg></button>
        <i class="caret"></i>
        <button title="View"><svg><use href="#cube-front"/></svg></button>
        <i class="caret"></i>
        <button title="Camera"><svg viewBox="0 0 16 16"><path d="M8 1v14M1 10h14M5 7l-4 3 4 3M11 7l4 3-4 3" fill="none" stroke="#27557f"/><circle cx="8" cy="9" r="3" fill="#2a80c8"/></svg></button>
        <i class="caret"></i>
        <button title="Perspective" class="on"><svg viewBox="0 0 16 16"><path d="M1 8l8-5 6-2v13H1z" fill="#5c9bd8" stroke="#246"/><path d="M9 3v9" stroke="#cfe4f7"/></svg></button>
        <button title="Visibility"><svg viewBox="0 0 16 16"><path d="M1 12L5 2M9 10l5-8M2 12c2-4 5-4 5 0M9 12c1-3 4-3 5 0" fill="none" stroke="#556"/></svg></button>
        <i class="caret"></i>
        <button title="Shading"><svg><use href="#cube-iso"/></svg></button>
        <i class="caret"></i>
        <button title="Section"><svg viewBox="0 0 16 16"><path d="M4 3h8l2 12H1z" fill="#7a8fb0" stroke="#445"/><path d="M9 3v8l5 4" stroke="#cde" fill="none"/></svg></button>
        <i class="caret"></i>
        <button title="Rebuild"><svg viewBox="0 0 16 16"><path d="M1 6l6-4v3c4 0 7 2 7 6H8l2-2-3 0v3z" fill="#5aa0d8" stroke="#246"/></svg></button>
        <button title="Select" class="on"><svg><use href="#cursor"/></svg></button>
        <button title="Pick"><svg><use href="#cursor"/></svg></button>
        <label class="drop any"><select aria-label="Selection filter"><option>Any</option></select><i class="caret"></i></label>
        <label class="drop level"><select aria-label="Assembly level"><option>Frame Assembly</option></select><i class="caret"></i></label>
        <button title="Structure"><svg viewBox="0 0 16 16"><path d="M6 2h5v5H6z" fill="#e02020"/><path d="M8 7v4M3 11h10" stroke="#333"/><path d="M1 11h5v4H1zM10 11h5v4h-5z" fill="#2a60c0"/></svg></button>
    </div>
</footer>

</body>
</html>
```

FILE: styles.css
```
/* base */
* {
    box-sizing: border-box;
}

html,
body {
    height: 100%;
    margin: 0;
}

body {
    display: flex;
    flex-direction: column;
    overflow: hidden;
    background: #e6e6e6;
    color: #444;
    font-family: "Open Sans", "Noto Sans", sans-serif;
    font-size: 11px;
    line-height: 15px;
}

h1,
h2,
ul,
hr {
    margin: 0;
    padding: 0;
    font-size: 11px;
    font-weight: normal;
}

button,
input,
select {
    margin: 0;
    padding: 0;
    border: 0;
    background: none;
    color: inherit;
    font: inherit;
}

svg {
    display: block;
    flex: none;
    width: 16px;
    height: 16px;
}

.sprite {
    position: absolute;
    width: 0;
    height: 0;
}

.caret {
    display: inline-block;
    flex: none;
    border: 3px solid transparent;
    border-top: 3px solid currentColor;
    border-bottom: 0;
}

.arrow-down {
    display: block;
    border: 4px solid transparent;
    border-top: 5px solid #666;
    border-bottom: 0;
}

.dash {
    display: block;
    width: 7px;
    height: 2px;
    margin-top: 6px;
    background: #fff;
}

/* title bar */
.titlebar {
    display: flex;
    flex: none;
    height: 34px;
    background: #2a579a;
    color: #fff;
}

.quick-access,
.window-buttons {
    display: flex;
    flex: none;
    height: 29px;
}

.app-icon {
    margin: 7px 6px 0 0;
}

.quick-access button {
    display: flex;
    align-items: center;
    justify-content: center;
    width: 24px;
}

.quick-access button svg {
    width: 15px;
    height: 15px;
}

.quick-access .active {
    background: #3565ae;
}

.quick-access .redo svg {
    transform: scaleX(-1);
    color: #7089b0;
}

.quick-access .more {
    width: 14px;
}

.titlebar h1 {
    flex: 1;
    padding-top: 9px;
    text-align: center;
}

.window-buttons {
    height: 22px;
    padding-right: 6px;
    gap: 24px;
}

.window-buttons button,
.tab-tools button {
    display: flex;
    align-items: center;
    justify-content: center;
    min-width: 12px;
}

.window-buttons svg,
.tab-tools svg {
    width: 10px;
    height: 10px;
}

/* ribbon tabs */
.tabs {
    display: flex;
    flex: none;
    align-items: flex-end;
    height: 29px;
    background: #2a579a;
    color: #fff;
}

.tabs > button {
    height: 27px;
    padding: 0 15px 3px;
}

.tabs > .roomy {
    padding: 0 16px 3px;
}

.tabs .selected {
    background: #fdfdfd;
    color: #1e66c8;
}

.command-search {
    display: flex;
    align-items: center;
    height: 27px;
    margin-left: 22px;
    padding-bottom: 3px;
    gap: 11px;
}

.command-search svg {
    width: 14px;
    height: 14px;
}

.command-search input {
    width: 140px;
    outline: 0;
}

.command-search input::placeholder {
    color: #b4c2da;
    opacity: 1;
}

.tab-tools {
    display: flex;
    align-items: center;
    height: 27px;
    margin-left: auto;
    padding-bottom: 3px;
    gap: 9px;
}

.tab-tools .help-icon {
    width: 14px;
    height: 14px;
}

/* ribbon body */
.ribbon {
    display: flex;
    flex: none;
    height: 97px;
    padding: 3px 0 2px;
    border-bottom: 1px solid #c6c6c6;
    background: #fdfdfd;
}

.group {
    display: flex;
    flex-direction: column;
    padding: 0 1px 0 4px;
    border-right: 1px solid #d4d4d4;
}

.group.commands {
    padding-right: 8px;
}

.group.dimension {
    padding-left: 8px;
}

.group h2 {
    margin-top: auto;
    padding-bottom: 2px;
    color: #666;
    text-align: center;
}

.tools {
    display: flex;
}

.big {
    display: flex;
    flex-direction: column;
    align-items: center;
    justify-content: flex-start;
    width: 46px;
    height: 72px;
    padding-top: 5px;
    white-space: nowrap;
}

.big svg {
    width: 30px;
    height: 32px;
    margin-bottom: 3px;
}

.big span .caret {
    margin: 0 0 3px 2px;
}

.big.mid {
    width: 54px;
}

.big.wide {
    width: 80px;
}

.dimension .wide {
    width: 77px;
}

button:disabled {
    color: #ababab;
}

.stack {
    display: flex;
    flex-direction: column;
    width: 98px;
    padding-left: 5px;
}

.stack.features {
    width: 114px;
}

.dimension .stack {
    width: 102px;
    padding-left: 8px;
}

.stack button {
    display: flex;
    align-items: center;
    height: 22px;
    gap: 4px;
    white-space: nowrap;
}

.stack .caret {
    margin-left: 2px;
}

/* document tabs */
.doc-tabs {
    display: flex;
    flex: none;
    align-items: flex-end;
    height: 23px;
    padding-left: 25px;
    border-bottom: 1px solid #bdbdbd;
}

.slant {
    width: 18px;
    height: 19px;
}

.doc-tab {
    display: flex;
    align-items: center;
    height: 19px;
    padding: 0 5px 2px 17px;
    gap: 17px;
    border: solid #999;
    border-width: 1px 1px 0 0;
    background: #fff;
}

.doc-tab svg {
    width: 9px;
    height: 9px;
}

.doc-tabs > .arrow-down {
    margin: 0 0 8px auto;
}

/* workspace */
.workspace {
    display: flex;
    flex: 1;
    min-height: 0;
}

.side-tools {
    display: flex;
    flex: none;
    align-items: flex-end;
    width: 24px;
    padding-bottom: 38px;
}

.side-bar {
    display: flex;
    flex-direction: column;
    width: 23px;
    padding-bottom: 5px;
    background: #f0f0f0;
}

.side-bar button {
    flex: none;
    height: 22px;
    padding-left: 3px;
}

.side-bar hr {
    width: 20px;
    height: 1px;
    margin: 4px 0 3px;
    border: 0;
    background: #ccc;
}

.grip {
    flex: none;
    width: 14px;
    height: 2px;
    margin: 8px 0 5px 3px;
    background: repeating-linear-gradient(90deg, #999 0 2px, transparent 2px 4px);
}

.grip.first {
    margin: 3px 0 5px 3px;
}

.fold {
    width: 0;
    margin: 1px 0 1px 1px;
    border: 3px solid transparent;
    border-right-color: #555;
}

/* scene panel */
.panel {
    display: flex;
    flex: none;
    flex-direction: column;
    width: 297px;
    padding: 0 4px 2px 0;
    border-right: 2px solid #ccd2d9;
}

.panel-head {
    display: flex;
    align-items: center;
    height: 24px;
    padding: 0 6px 0 4px;
    gap: 10px;
}

.panel-head h2 {
    margin-right: auto;
}

.panel-head svg {
    width: 10px;
    height: 10px;
}

.panel-search {
    display: flex;
    align-items: center;
    height: 20px;
    gap: 1px;
}

.panel-search input {
    flex: 1;
    min-width: 0;
    height: 20px;
    padding: 0 3px 3px;
    background: #fff;
}

.panel-search input::placeholder {
    color: #555;
    opacity: 1;
}

.panel-search button {
    display: flex;
    justify-content: center;
    width: 20px;
}

.panel-search .clear {
    width: 18px;
    border: 1px solid #a5a58c;
    background: #eeeede;
}

.tree-box {
    display: flex;
    flex: 1;
    flex-direction: column;
    min-height: 0;
    border: 1px solid #828790;
    background: #fff;
}

.tree-row {
    display: flex;
    flex: 1;
    min-height: 0;
}

.tree {
    flex: 1;
    overflow: hidden;
    padding: 1px 0 0 22px;
    background: repeating-linear-gradient(#888 0 1px, transparent 1px 2px) 12px 0 / 1px 100% no-repeat;
    color: #111;
}

.tree ul {
    list-style: none;
}

.tree ul ul {
    margin-left: 19px;
}

.tree li {
    background: repeating-linear-gradient(#888 0 1px, transparent 1px 2px) 9px 0 / 1px 100% no-repeat;
}

.tree ul ul > li:last-child {
    background-size: 1px 10px;
}

.node {
    display: flex;
    align-items: center;
    height: 18px;
    background: repeating-linear-gradient(90deg, #888 0 1px, transparent 1px 2px) 9px 10px / 10px 1px no-repeat;
    white-space: nowrap;
}

.node.leaf {
    padding-left: 19px;
}

.node svg {
    margin: 1px 5px 0 1px;
}

.node.pinned svg {
    margin-right: 2px;
}

.plus,
.minus {
    flex: none;
    width: 9px;
    height: 9px;
    margin: 3px 5px 0;
    border: 1px solid #9a9a9a;
    background: linear-gradient(#2b3f8c, #2b3f8c) center / 5px 1px no-repeat, #fff;
}

.plus {
    background: linear-gradient(#2b3f8c, #2b3f8c) center / 5px 1px no-repeat, linear-gradient(#2b3f8c, #2b3f8c) center / 1px 5px no-repeat, #fff;
}

.vscroll,
.hscroll {
    display: flex;
    flex: none;
    background: #f0f0f0;
}

.vscroll {
    flex-direction: column;
    width: 17px;
}

.hscroll {
    height: 17px;
    padding-right: 17px;
}

.vscroll button,
.hscroll button {
    display: flex;
    flex: none;
    align-items: center;
    justify-content: center;
    width: 17px;
    height: 17px;
}

.vscroll svg,
.hscroll svg {
    width: 9px;
    height: 9px;
}

.track {
    display: flex;
    flex: 1;
}

.vscroll .track {
    flex-direction: column;
    justify-content: flex-end;
    padding-bottom: 53px;
}

.vscroll .track i {
    flex: 0 0 288px;
    width: 15px;
    background: #cdcdcd;
}

.hscroll .track i {
    width: 89%;
    height: 15px;
    background: #cdcdcd;
}

.panel-tabs {
    display: flex;
    height: 22px;
}

.panel-tabs button {
    display: flex;
    align-items: center;
    padding: 0 5px 1px;
    gap: 2px;
}

.panel-tabs .selected {
    padding: 0 4px 1px 3px;
    border: 1px solid #bbb;
    border-top: 0;
    background: #fff;
}

/* 3D view */
.viewport {
    position: relative;
    flex: 1;
    min-width: 0;
    margin-bottom: 1px;
    background: linear-gradient(#596ea5, #a5d1d6);
}

.model {
    width: 100%;
    height: 100%;
    fill: none;
}

.tube {
    stroke: #050505;
    stroke-width: 16px;
}

.tube.diagonal {
    stroke-width: 14px;
}

.brace {
    fill: #080808;
}

.shade {
    stroke: #181818;
    stroke-width: 7px;
}

.shine {
    stroke: #3a3a3a;
    stroke-width: 3px;
}

.shine.dim {
    stroke: #2a2a2a;
}

.seam {
    stroke: #6a6a6a;
}

.end {
    fill: #161616;
    stroke: #666;
}

.triad {
    position: absolute;
    bottom: 28px;
    left: 15px;
    width: 48px;
    height: 36px;
    font-size: 10px;
}

/* catalog strip */
.starter {
    flex: none;
    height: 31px;
    padding: 3px 0 0 5px;
    border-bottom: 1px solid #c4c4c4;
}

.starter button {
    display: flex;
    align-items: center;
    height: 18px;
    gap: 2px;
}

.starter i {
    display: block;
    width: 52px;
    height: 6px;
    margin-top: 3px;
    background: #d4d4d4;
}

/* status bar, its lower part runs under the window edge */
.statusbar {
    display: flex;
    flex: none;
    height: 14px;
    overflow: hidden;
    background: #fdfdfd;
    line-height: 22px;
    white-space: nowrap;
}

.view-size {
    width: 132px;
    margin-left: auto;
}

.ruler {
    margin: 3px 2px 0 0;
}

.units {
    width: 43px;
    color: #111;
}

.unit-value {
    width: 58px;
}

.status-tools {
    display: flex;
    align-items: flex-start;
    height: 24px;
}

.status-tools button {
    display: flex;
    align-items: flex-start;
    justify-content: center;
    width: 23px;
    height: 24px;
    padding-top: 4px;
}

.status-tools .on {
    background: #cdcdcd;
}

.status-tools .caret {
    margin: 9px 3px 0 2px;
}

.drop {
    display: flex;
    height: 24px;
    margin-top: 2px;
    border: 1px solid #aaa;
    background: #fff;
    color: #111;
}

.drop select {
    flex: 1;
    min-width: 0;
    padding: 0 2px;
    appearance: none;
    line-height: 18px;
    text-overflow: clip;
}

.drop.any {
    width: 90px;
}

.drop.level {
    width: 66px;
}
```
